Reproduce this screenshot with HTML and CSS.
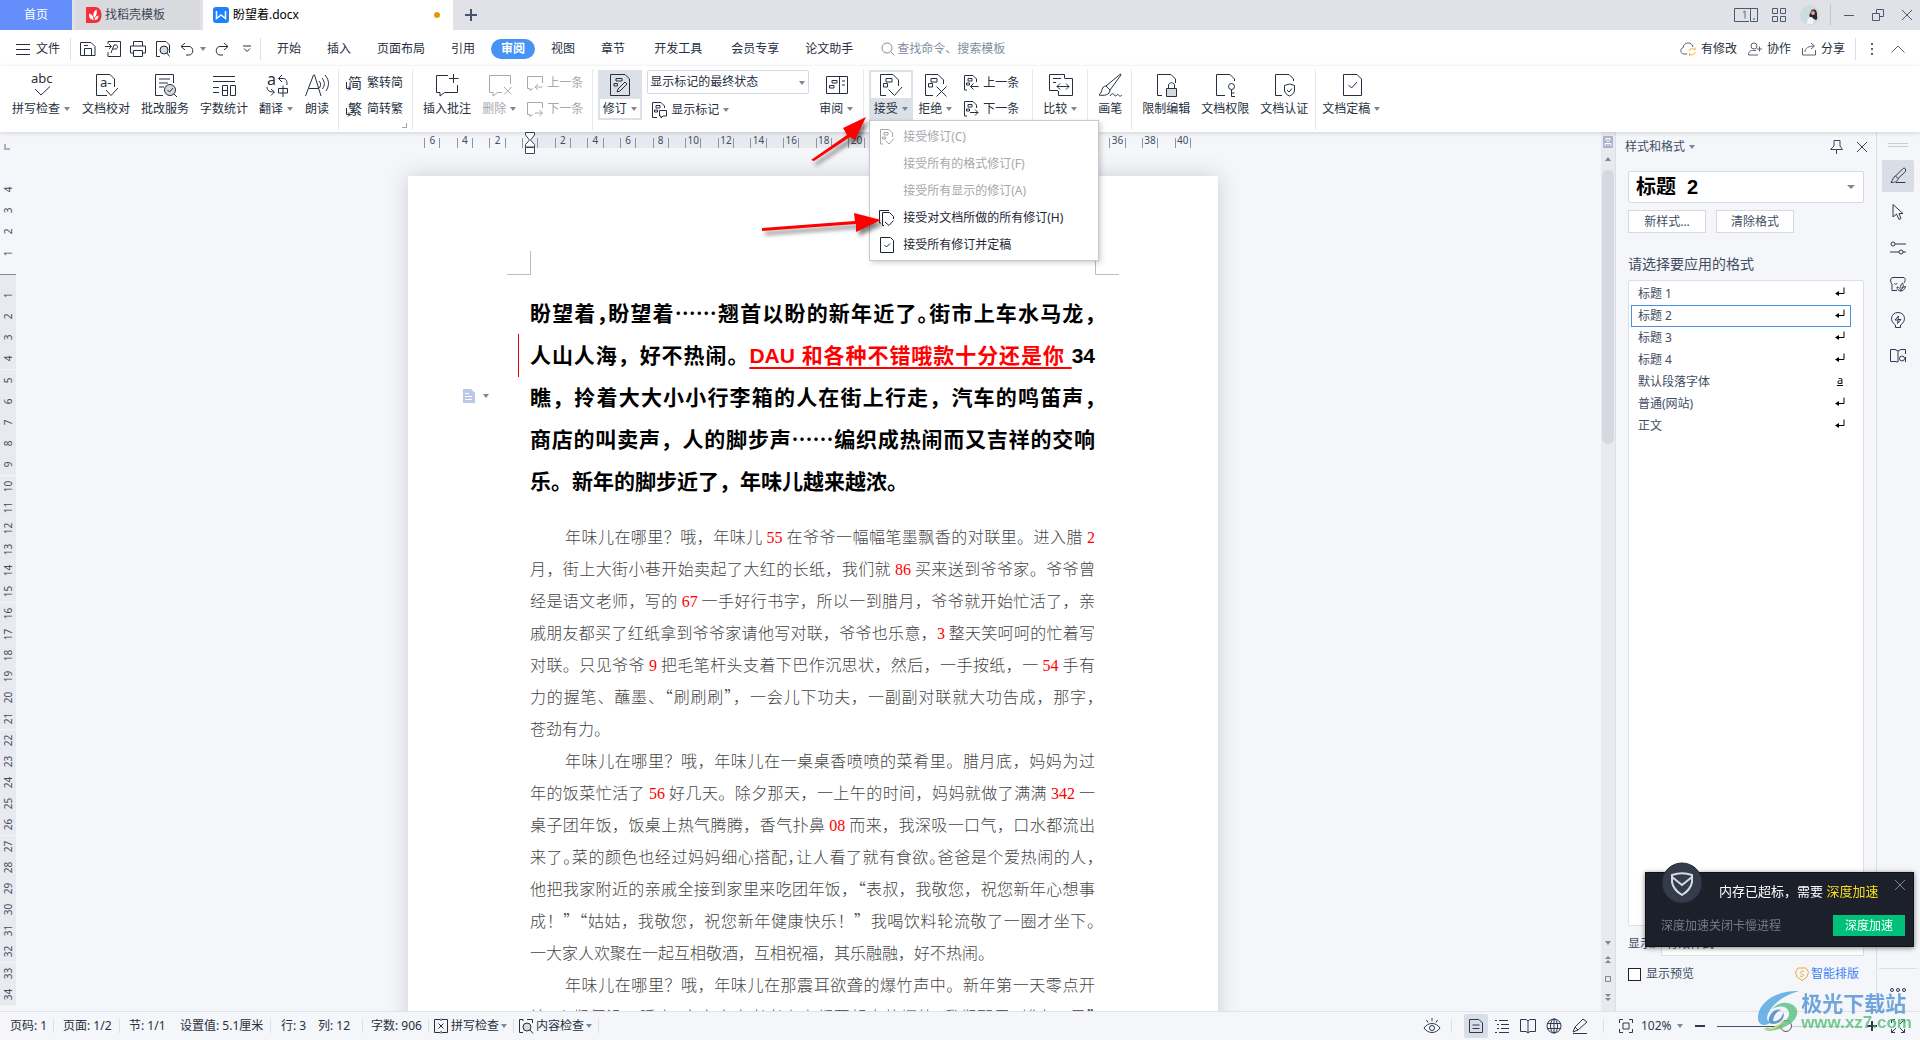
FILE: index.html
```html
<!DOCTYPE html>
<html lang="zh-CN">
<head>
<meta charset="utf-8">
<title>盼望着.docx</title>
<link rel="stylesheet" href="styles.css">
</head>
<body>
<svg class="defs" aria-hidden="true">
  <symbol id="accept" viewBox="0 0 24 24"><path d="M7 22.500H1.500V1.500H14L19.500 7V13"/><path d="M7 5.500h6v3.500H7zM4.500 10.500h4v3.500h-4z"/><path d="M9.500 16.500L15.500 22.500L23 14"/></symbol>
  <symbol id="reject" viewBox="0 0 24 24"><path d="M9 22.500H1.500V1.500H14L19.500 7V11"/><path d="M7 5.500h6v3.500H7zM4.500 10.500h4v3.500h-4z"/><path d="M12.500 13.500L22.500 23.500M22.500 13.500L12.500 23.500"/></symbol>
  <symbol id="rev-prev" viewBox="0 0 16 16"><path d="M4 15H1.500V.5H10L13.500 4V7M5 3.500h4v2.500H5zM3.500 8h3v2h-3zM15.500 11.500H7.500M10.500 8.500L7.500 11.500L10.500 14.500"/></symbol>
  <symbol id="rev-next" viewBox="0 0 16 16"><path d="M4 15H1.500V.5H10L13.500 4V7M5 3.500h4v2.500H5zM3.500 8h3v2h-3zM7 11.500H15M12 8.500L15 11.500L12 14.500"/></symbol>
  <symbol id="com-prev" viewBox="0 0 16 16"><path d="M15.500 8V1.500H.5V13.500H3V15.500L6 13.500M15.500 12H8M11 9L8 12L11 15"/></symbol>
  <symbol id="com-next" viewBox="0 0 16 16"><path d="M15.500 7V1.500H.5V13.500H3V15.500L6 13.500M8 12H15.500M12.500 9L15.500 12L12.500 15"/></symbol>
  <symbol id="close" viewBox="0 0 12 12"><path d="M1 1L11 11M11 1L1 11"/></symbol>
  <symbol id="return" viewBox="0 0 10 10"><path d="M9 0.500V6.500H2"/><path class="solid" d="M0 6.500L4 4V9Z"/></symbol>
</svg>

<div class="app">
  <header class="titlebar">
    <button class="tab tab-home">首页</button>
    <button class="tab tab-store">
      <svg class="ic16" viewBox="0 0 16 16"><path d="M0 0H9C13 0 15.500 3 15.500 8S13 16 9 16H0z" fill="#f5303c" stroke="none"/><path d="M7.500 13C3 12 2.500 9 3.500 6.500C6 7.500 7.500 9 7.500 13ZM8 11C6.500 7 8 4 10.500 2.500C11.500 6 10.500 9 8 11ZM8.500 13C9 10 10.500 9 12.500 8.500C12.500 11.500 11 13 8.500 13Z" fill="#fff" stroke="none"/></svg>
      <span>找稻壳模板</span>
    </button>
    <button class="tab tab-doc">
      <svg class="ic16" viewBox="0 0 16 16"><rect width="16" height="16" rx="3" fill="#1c83fb" stroke="none"/><path d="M3.500 4V11.500L8 8L12.500 11.500V4" stroke="#fff" stroke-width="1.500"/></svg>
      <span>盼望着.docx</span><i class="unsaved"></i>
    </button>
    <button class="new-tab" aria-label="新建"><svg class="ic12" viewBox="0 0 12 12"><path d="M6 0V12M0 6H12" stroke-width="2"/></svg></button>
    <div class="window-tools">
      <svg class="ic24" viewBox="0 0 24 14"><path d="M15 13.500H.5V.5H23.500M16.500 2.500V13.500H23.500V.5H16.500zM19 11H21"/><path d="M9 4.500L11 3V10.500" stroke="#6b6660"/></svg>
      <svg class="ic14" viewBox="0 0 14 14"><path d="M.5.5h5v5h-5zM8.500.5h5v5h-5zM.5 8.500h5v5h-5zM8.500 8.500h5v5h-5z"/></svg>
      <svg class="avatar" viewBox="0 0 20 20"><circle cx="10" cy="10" r="10" fill="#cfdbe2" stroke="none"/><path d="M10 12C8 10 11 8 11 6C13 3 17 4 17 9C17 13 18 14 16 15Z" fill="#2e2529" stroke="none"/><path d="M7 19C7 14 9 12 12 12C14 14 14 17 13 19Z" fill="#f2f5f7" stroke="none"/><circle cx="13" cy="8" r="2" fill="#dba79a" stroke="none"/><path d="M11 5L15 4" stroke="#b99a70"/></svg>
      <span class="sep"></span>
      <button aria-label="最小化"><svg class="ic12" viewBox="0 0 12 12"><path d="M1 6.500H11"/></svg></button>
      <button aria-label="还原"><svg class="ic12" viewBox="0 0 12 12"><path d="M.5 4.500h7v7h-7zM4.500 4V.5H11.500V7.500H8"/></svg></button>
      <button aria-label="关闭"><svg class="ic12"><use href="#close"/></svg></button>
    </div>
  </header>

  <nav class="menubar">
    <button class="file"><svg class="ic14" viewBox="0 0 14 12"><path d="M0 1.500H14M0 6.500H14M0 11.500H14" /></svg>文件</button>
    <span class="sep"></span>
    <div class="quick">
      <button aria-label="保存"><svg class="ic16" viewBox="0 0 16 16"><path d="M.5 1.500H11L15 5.500V14.500H.5zM4.500 14.500V7.500H11.500V14.500M4 4.500H8"/></svg></button>
      <button aria-label="输出为PDF"><svg class="ic16" viewBox="0 0 16 16"><path d="M3 3V.5H15.500V15.500H3V11M0 5.500H6M4 3L6.500 5.500L4 8M6 12L9 4H11C13 4 13 8 11 8H8"/></svg></button>
      <button aria-label="打印"><svg class="ic16" viewBox="0 0 16 16"><path d="M3.500 5V.5H12.500V5M3.500 12H.5V5H15.500V12H12.500M3.500 9.500H12.500V15.500H3.500z"/></svg></button>
      <button aria-label="打印预览"><svg class="ic16" viewBox="0 0 16 16"><path d="M5 15.500H1.500V.5H11L14.500 4V12"/><circle cx="9" cy="9" r="4" fill="#d5dae0"/><path d="M12 12L14.500 15.500"/></svg></button>
      <button class="undo" aria-label="撤销"><svg class="ic14" viewBox="0 0 14 14"><path d="M5 1L1 4.500L5 8M1 4.500H9C14 4.500 14 13 9 13H6"/></svg><i class="caret"></i></button>
      <button class="redo" aria-label="恢复"><svg class="ic14" viewBox="0 0 14 14"><path d="M9 1L13 4.500L9 8M13 4.500H5C0 4.500 0 13 5 13H8"/></svg></button>
      <button aria-label="更多"><svg class="ic8" viewBox="0 0 8 8"><path d="M0 1H8M1 3.500L4 6.500L7 3.500"/></svg></button>
    </div>
    <span class="sep"></span>
    <div class="menus">
      <button>开始</button><button>插入</button><button>页面布局</button><button>引用</button><button class="active">审阅</button><button>视图</button><button>章节</button><button class="spaced">开发工具</button><button>会员专享</button><button>论文助手</button>
    </div>
    <label class="search"><svg class="ic14" viewBox="0 0 14 14"><circle cx="6" cy="6" r="5"/><path d="M10 10L13.500 13.500"/></svg><input type="text" placeholder="查找命令、搜索模板"></label>
    <div class="share">
      <button><svg class="ic16" viewBox="0 0 16 14"><path d="M7 12H4C0 12 0 6 3 6C3 0 12-1 13 5"/><path d="M9 9C10 6 13 6 15 8V5.500M15.500 10C14 13 11 14 9.500 11.500V14" stroke="#f5a81c"/></svg>有修改</button>
      <button><svg class="ic14" viewBox="0 0 14 14"><circle cx="6" cy="4" r="3"/><path d="M10 13H.5C.5 8 4 8.500 6 8.500H8M11.500 4.500V9.500M9 7H14"/></svg>协作</button>
      <button><svg class="ic14" viewBox="0 0 14 14"><path d="M.5 6V13H13.500V8M3 10C3 6 7 4 12 4M9 1L12.500 4L9 7"/></svg>分享</button>
      <span class="sep"></span>
      <button aria-label="更多"><svg class="ic4" viewBox="0 0 4 14"><path d="M2 1V3M2 6V8M2 11V13" stroke-width="2"/></svg></button>
      <button aria-label="收起功能区"><svg class="ic14" viewBox="0 0 14 8"><path d="M.5 7.500L7 1L13.500 7.500"/></svg></button>
    </div>
  </nav>

  <section class="ribbon">
    <div class="group g-proof">
      <button class="big"><svg class="ic24" viewBox="0 0 24 24"><text x="1" y="10" class="abc">abc</text><path d="M5 16L11 22L20 13.500"/></svg><span>拼写检查<i class="caret"></i></span></button>
      <button class="big"><svg class="ic24" viewBox="0 0 24 24"><path d="M13 22.500H2.500V1.500H16L20.500 6V14M12 17L17 22.500L24 15"/><text x="6" y="14" class="abc">a-</text></svg><span>文档校对</span></button>
      <button class="big"><svg class="ic24" viewBox="0 0 24 24"><path d="M10 22.500H2.500V1.500H20.500V10M6 6H17M6 10H15M6 14H11"/><circle cx="17" cy="17" r="5.500" fill="#d5dae0"/><path d="M14.500 17L16.500 19L20 15M21 21L24 24"/></svg><span>批改服务</span></button>
      <button class="big"><svg class="ic24" viewBox="0 0 24 24"><path d="M1 3.500H23M1 8.500H23M1 14.500H7M1 19.500H7M10.500 12.500H15.500V22.500H10.500zM10.500 17.500H15.500M18.500 12.500H23.500V22.500H18.500z"/></svg><span>字数统计</span></button>
      <button class="big"><svg class="ic24" viewBox="0 0 24 24"><text x="2" y="12" class="glyph">a</text><path d="M17 2L13.500 5.500L17 9M13.500 5.500H18C22 5.500 22 9 22 12M2 14C2 18 5 19 9 19M6 16L9.500 19L6 22.500M13.500 15.500H22.500V20H13.500zM18 12.500V24"/></svg><span>翻译<i class="caret"></i></span></button>
      <button class="big"><svg class="ic24" viewBox="0 0 24 24"><path d="M.5 23L8.500 2H9.500L16 23M4 15.500H13.500M14 8C16 10 16 12 14.500 15M17 5C20 9 20 12 17.500 16M20 2C25 8 24 13 21 18"/></svg><span>朗读</span></button>
    </div>
    <div class="group g-conv">
      <div class="stack">
        <button><svg class="ic16" viewBox="0 0 16 16"><text x="2" y="13" class="han">简</text><path d="M.5 7V13.500H4M2 11.500L4 13.500L2 15.500"/></svg>繁转简</button>
        <button><svg class="ic16" viewBox="0 0 16 16"><text x="2" y="13" class="han">繁</text><path d="M.5 7V13.500H4M2 11.500L4 13.500L2 15.500"/></svg>简转繁</button>
      </div>
      <i class="corner"></i>
    </div>
    <div class="group g-comment">
      <button class="big"><svg class="ic24" viewBox="0 0 24 24"><path d="M13 2.500H1.500V19.500H5V23L9.500 19.500H22.500V12M18.500 1V10M14 5.500H23.500"/></svg><span>插入批注</span></button>
      <button class="big off"><svg class="ic24" viewBox="0 0 24 24"><path d="M22.500 11V2.500H1.500V19.500H5V23L9.500 19.500H14M16 14L23.500 21.500M23.500 14L16 21.500"/></svg><span>删除<i class="caret"></i></span></button>
      <div class="stack off">
        <button><svg class="ic16"><use href="#com-prev"/></svg>上一条</button>
        <button><svg class="ic16"><use href="#com-next"/></svg>下一条</button>
      </div>
    </div>
    <div class="group g-track">
      <button class="big boxed top-on"><svg class="ic24" viewBox="0 0 24 24"><path d="M2.500 1.500H17L21.500 6V22.500H2.500zM8 5.500h6V8H8zM6 10.500h3.500V13H6zM9 19L10 16L17 9L19 11L12 18z"/></svg><span>修订<i class="caret"></i></span></button>
      <div class="track-opts">
        <div class="select-wrap"><select aria-label="显示标记方式"><option>显示标记的最终状态</option></select><i class="caret"></i></div>
        <button><svg class="ic16" viewBox="0 0 16 16"><path d="M6 15.500H1.500V.5H10L13.500 4V6M5 3.500h4v2.500H5zM3.500 8h3v2h-3zM8.500 8.500H15.500V14H12L10 16V14H8.500z"/></svg>显示标记<i class="caret"></i></button>
      </div>
      <button class="big"><svg class="ic24" viewBox="0 0 24 24"><path d="M1.500 3.500H22.500V20.500H1.500zM14.500 3.500V20.500M17 8H20M17 12H20M7 7.500h5V10H7zM4.500 12.500H9V15H4.500z"/></svg><span>审阅<i class="caret"></i></span></button>
    </div>
    <div class="group g-accept">
      <div class="dropdown">
        <button class="big boxed bottom-on"><svg class="ic24"><use href="#accept"/></svg><span>接受<i class="caret"></i></span></button>
        <div class="menu" role="menu">
          <button class="off" role="menuitem" disabled><svg class="ic16" viewBox="0 0 16 16"><path d="M4 15H1.500V.5H10L13.500 4V8M5 3.500h4v2.500H5zM3.500 8h3v2h-3zM6.500 11.500L10 15L15 9.500"/></svg><span>接受修订(C)</span></button>
          <button class="off" role="menuitem" disabled><i class="ic16"></i><span>接受所有的格式修订(F)</span></button>
          <button class="off" role="menuitem" disabled><i class="ic16"></i><span>接受所有显示的修订(A)</span></button>
          <button role="menuitem"><svg class="ic16" viewBox="0 0 16 16"><path d="M2 13H.5V.5H10M5 15.500H3.500V2.500H10.500L14.500 6.500V9M6 12L10 15.500L14.500 10.500"/></svg><span>接受对文档所做的所有修订(H)</span></button>
          <button role="menuitem"><svg class="ic16" viewBox="0 0 16 16"><path d="M1.500.5H11.500L14.500 3.500V15.500H1.500zM5.500 8L7.500 10L11 6.500"/></svg><span>接受所有修订并定稿</span></button>
        </div>
      </div>
      <button class="big"><svg class="ic24"><use href="#reject"/></svg><span>拒绝<i class="caret"></i></span></button>
      <div class="stack">
        <button><svg class="ic16"><use href="#rev-prev"/></svg>上一条</button>
        <button><svg class="ic16"><use href="#rev-next"/></svg>下一条</button>
      </div>
    </div>
    <div class="group">
      <button class="big"><svg class="ic24" viewBox="0 0 24 24"><path d="M9 17.500H.5V1.500H15.500V5M4 5.500H12M4 9.500H7M15.500 5.500H23.500V22.500H9.500V18M8 13.500H20M11 10.500L8 13.500L11 16.500M17 10.500L20 13.500L17 16.500"/></svg><span>比较<i class="caret"></i></span></button>
    </div>
    <div class="group">
      <button class="big"><svg class="ic24" viewBox="0 0 24 24"><path d="M22.500 1L8 13L12 17L23 2zM8 13C3 13 5 19 1 22C6 23 12 22 12 17M12 23C14 20 15 20 16.500 22.500C18 24 19 21 20 21.500C22 24 23 23 24 22"/></svg><span>画笔</span></button>
    </div>
    <div class="group g-protect">
      <button class="big"><svg class="ic24" viewBox="0 0 24 24"><path d="M8 22.500H3.500V1.500H17L21.500 6V10"/><path d="M12.500 15.500H22.500V23.500H12.500z" fill="#d5dae0"/><path d="M14.500 15.500V12C15 9 20 9 20.500 12V15.500"/></svg><span>限制编辑</span></button>
      <button class="big"><svg class="ic24" viewBox="0 0 24 24"><path d="M12 22.500H3.500V1.500H17L21.500 6V8"/><circle cx="18.500" cy="13.500" r="3"/><path d="M18.500 16.500V23.500H22M18.500 20H21.500"/></svg><span>文档权限</span></button>
      <button class="big"><svg class="ic24" viewBox="0 0 24 24"><path d="M10 22.500H3.500V1.500H17L21.500 6V8M17.500 11L22.500 12.500V17C22.500 20 20 22 17.500 23C15 22 12.500 20 12.500 17V12.500zM15 17L17 19L20 15.500"/></svg><span>文档认证</span></button>
    </div>
    <div class="group g-final">
      <button class="big"><svg class="ic24" viewBox="0 0 24 24"><path d="M3.500 1.500H17L21.500 6V22.500H3.500zM8.500 12L11.500 15L17 9"/></svg><span>文档定稿<i class="caret"></i></span></button>
    </div>
  </section>

  <main class="workspace">
    <aside class="vruler">
      <i class="tabstop"></i>
      <div class="vscale"><span>4</span><span>3</span><span>2</span><span>1</span><span class="origin"></span><span>1</span><span>2</span><span>3</span><span>4</span><span>5</span><span>6</span><span>7</span><span>8</span><span>9</span><span>10</span><span>11</span><span>12</span><span>13</span><span>14</span><span>15</span><span>16</span><span>17</span><span>18</span><span>19</span><span>20</span><span>21</span><span>22</span><span>23</span><span>24</span><span>25</span><span>26</span><span>27</span><span>28</span><span>29</span><span>30</span><span>31</span><span>32</span><span>33</span><span>34</span></div>
    </aside>

    <div class="canvas">
      <div class="hruler">
        <div class="hscale"><b><span>6</span></b><b><span>4</span></b><b><span>2</span></b><b><span></span></b><b><span>2</span></b><b><span>4</span></b><b><span>6</span></b><b><span>8</span></b><b><span>10</span></b><b><span>12</span></b><b><span>14</span></b><b><span>16</span></b><b><span>18</span></b><b><span>20</span></b><b><span></span></b><b><span></span></b><b><span></span></b><b><span></span></b><b><span></span></b><b><span></span></b><b><span></span></b><b><span>36</span></b><b><span>38</span></b><b><span>40</span></b></div>
        <svg class="indent" viewBox="0 0 10 22"><path d="M.5.5H9.500V3L5.500 8L9.500 12.500V15H.5V12.500L4.500 8L.5 3zM.5 15.500h9v6h-9z" fill="#fff"/></svg>
      </div>
      <article class="page">
        <i class="crop crop-l"></i><i class="crop crop-r"></i>
        <i class="change-bar"></i>
        <button class="paste-opt" aria-label="段落布局"><svg class="ic14" viewBox="0 0 12 14"><path d="M0 0H8L12 4V14H0z" fill="#b9c9e6" stroke="none"/><path d="M2 4.500H6M2 7.500H9M2 10.500H9" stroke="#fff"/></svg><i class="caret"></i></button>
        <h2>
          <span class="ln">盼望着<s>，</s>盼望着<span class="dots">……</span>翘首以盼的新年近了<s>。</s>街市上车水马龙<s>，</s></span>
          <span class="ln">人山人海，好不热闹。<ins>DAU 和各种不错哦款十分还是你 </ins>34</span>
          <span class="ln">瞧，拎着大大小小行李箱的人在街上行走，汽车的鸣笛声<s>，</s></span>
          <span class="ln">商店的叫卖声，人的脚步声<span class="dots">……</span>编织成热闹而又吉祥的交响</span>
          <span class="ln end">乐。新年的脚步近了，年味儿越来越浓。</span>
        </h2>
        <p>
          <span class="ln first">年味儿在哪里？哦，年味儿 <em>55</em> 在爷爷一幅幅笔墨飘香的对联里。进入腊 <em>2</em></span>
          <span class="ln">月，街上大街小巷开始卖起了大红的长纸，我们就 <em>86</em> 买来送到爷爷家。爷爷曾</span>
          <span class="ln">经是语文老师，写的 <em>67</em> 一手好行书字，所以一到腊月，爷爷就开始忙活了，亲</span>
          <span class="ln">戚朋友都买了红纸拿到爷爷家请他写对联，爷爷也乐意，<em>3</em> 整天笑呵呵的忙着写</span>
          <span class="ln">对联。只见爷爷 <em>9</em> 把毛笔杆头支着下巴作沉思状，然后，一手按纸，一 <em>54</em> 手有</span>
          <span class="ln">力的握笔、蘸墨、“刷刷刷”，一会儿下功夫，一副副对联就大功告成，那字<s>，</s></span>
          <span class="ln end">苍劲有力。</span>
        </p>
        <p>
          <span class="ln first">年味儿在哪里？哦，年味儿在一桌桌香喷喷的菜肴里。腊月底，妈妈为过</span>
          <span class="ln">年的饭菜忙活了 <em>56</em> 好几天。除夕那天，一上午的时间，妈妈就做了满满 <em>342</em> 一</span>
          <span class="ln">桌子团年饭，饭桌上热气腾腾，香气扑鼻 <em>08</em> 而来，我深吸一口气，口水都流出</span>
          <span class="ln">来了<s>。</s>菜的颜色也经过妈妈细心搭配<s>，</s>让人看了就有食欲<s>。</s>爸爸是个爱热闹的人<s>，</s></span>
          <span class="ln">他把我家附近的亲戚全接到家里来吃团年饭，“表叔，我敬您，祝您新年心想事</span>
          <span class="ln">成！”“姑姑，我敬您，祝您新年健康快乐！”我喝饮料轮流敬了一圈才坐下<s>。</s></span>
          <span class="ln end">一大家人欢聚在一起互相敬酒，互相祝福，其乐融融，好不热闹。</span>
        </p>
        <p>
          <span class="ln first">年味儿在哪里？哦，年味儿在那震耳欲聋的爆竹声中。新年第一天零点开</span>
          <span class="ln">始<s>，</s>人们便没了睡意<s>，</s>家家户户老老少少都要起来放爆竹<s>，</s>我们那里叫<s>“</s>出天星<s>”</s></span>
        </p>
      </article>
    </div>

    <div class="scrollbar">
      <svg class="ruler-toggle" viewBox="0 0 10 12"><rect width="10" height="12" rx="1" fill="#aab4cb" stroke="none"/><path d="M3 2.500H7V4L5 5.500L3 4zM2 10V7.500H8V10M5 7.500V9" stroke="#fff"/></svg>
      <div class="track"><i class="caret up"></i><i class="thumb"></i></div>
      <div class="jumps"><i class="caret"></i>
        <svg viewBox="0 0 8 8"><path class="solid" d="M4 0L7 3H1zM4 4L7 7H1z"/></svg>
        <svg viewBox="0 0 8 8"><path d="M1.500 1.500h5v5h-5z"/></svg>
        <svg viewBox="0 0 8 8"><path class="solid" d="M1 0H7L4 3zM1 4H7L4 7z"/></svg>
      </div>
    </div>

    <aside class="styles">
      <header><button class="pane-title">样式和格式<i class="caret"></i></button>
        <button aria-label="固定"><svg class="ic14" viewBox="0 0 14 14"><path d="M4 .5H10V6L12.500 9.500H.5L4 6zM6.500 9.500V14"/></svg></button>
        <button aria-label="关闭窗格"><svg class="ic12"><use href="#close"/></svg></button></header>
      <div class="select-wrap current"><select aria-label="当前样式"><option>标题&nbsp; 2</option></select><i class="caret"></i></div>
      <div class="style-btns"><button>新样式...</button><button>清除格式</button></div>
      <h3>请选择要应用的格式</h3>
      <ul>
        <li><button>标题 1<svg><use href="#return"/></svg></button></li>
        <li><button class="sel">标题 2<svg><use href="#return"/></svg></button></li>
        <li><button>标题 3<svg><use href="#return"/></svg></button></li>
        <li><button>标题 4<svg><use href="#return"/></svg></button></li>
        <li><button>默认段落字体<u>a</u></button></li>
        <li><button>普通(网站)<svg><use href="#return"/></svg></button></li>
        <li><button>正文<svg><use href="#return"/></svg></button></li>
      </ul>
      <div class="show-row"><label for="show">显示:</label><select id="show"><option>有效样式</option></select></div>
      <div class="preview-row"><label><input type="checkbox">显示预览</label>
        <a href="#"><svg class="ic14" viewBox="0 0 14 14"><path d="M3 1H11L13.500 5L12 10L7 13.500L2 10L.5 5z" stroke="#f0ab3c"/><path d="M9 4.500C6 3 4 6 7 7C10 8 8 10.500 5 9" stroke="#f0ab3c"/></svg>智能排版</a></div>
    </aside>

    <nav class="toolstrip">
      <i class="grip"></i>
      <button class="on" aria-label="样式"><svg class="ic16" viewBox="0 0 16 16"><path d="M13 .5L5.500 8L8 10.500L15.500 3.500V1C15 0 14 0 13 .5zM5.500 8C3 9 3 12 1 14.500C4 14.500 8 14 8 10.500M6 14.500H15.500"/></svg></button>
      <button aria-label="选择"><svg class="ic16" viewBox="0 0 16 16"><path d="M3 .5V13L6.500 10L9 15.500L11 14.500L9 9.500H13z"/></svg></button>
      <button aria-label="属性"><svg class="ic16" viewBox="0 0 16 16"><circle cx="3" cy="4" r="2"/><circle cx="11" cy="12" r="2"/><path d="M5 4H16M0 12H9M13 12H16"/></svg></button>
      <button aria-label="稻壳"><svg class="ic16" viewBox="0 0 16 16"><path d="M7 14.500H2V8M2 8C0 6 0 1.500 3 1.500H13C16 1.500 15.500 5 14 7M4.500 7C5 9 6.500 9 7 7"/><path d="M11 15C8 15 7 13 7 11C9 11 11 13 11 15ZM11 15C13 15 15 13 15.500 10.500C13 11 11 13 11 15ZM11 12C10 10 11 8 12.500 7C14 9 13 11 12 12.500"/></svg></button>
      <button aria-label="帮助"><svg class="ic16" viewBox="0 0 16 16"><path d="M5.500 13C-1 9 1 .5 8 .5S17 9 10.500 13V15.500H5.500zM8.500 4L5 8H8L7.500 11.500L11 7.500H8z"/></svg></button>
      <button aria-label="阅读"><svg class="ic16" viewBox="0 0 16 16"><path d="M.5 1.500H5L8 3L11 1.500H15.500V6M8 3V14M.5 1.500V13.500H5L8 14M15.500 14V9"/><circle cx="12" cy="10.500" r="2.500"/></svg></button>
      <span class="strip-end"><svg class="ic16" viewBox="0 0 16 4"><circle cx="2" cy="2" r="1.500"/><circle cx="8" cy="2" r="1.500"/><circle cx="14" cy="2" r="1.500"/></svg></span>
    </nav>
  </main>

  <footer class="status">
    <div class="status-left">
      <span class="w-code">页码: 1</span><i class="sep"></i><span class="w-page">页面: 1/2</span><i class="sep"></i><span class="w-sec">节: 1/1</span><span class="w-set">设置值: 5.1厘米</span><i class="sep"></i><span class="w-row">行: 3</span><span class="w-col">列: 12</span><i class="sep"></i><span class="w-words">字数: 906</span><i class="sep"></i>
      <button><svg class="ic16" viewBox="0 0 16 16"><path d="M7 1.500H1.500V14.500H7M9 1.500H14.500V14.500H9M5.500 5.500L10.500 10.500M10.500 5.500L5.500 10.500M8 .5V3M8 13V15.500"/></svg>拼写检查<i class="caret"></i></button><i class="sep"></i>
      <button><svg class="ic16" viewBox="0 0 16 16"><path d="M5 14.500H1.500V1.500H5M9 1.500H14.500V5M5 1.500V3"/><circle cx="9" cy="9" r="4" fill="#d5dae0"/><path d="M12 12L15 15.500"/></svg>内容检查<i class="caret"></i></button><i class="sep"></i>
    </div>
    <div class="status-right">
      <button aria-label="护眼模式"><svg class="ic16" viewBox="0 0 16 16"><path d="M0 10C4 4 12 4 16 10C12 16 4 16 0 10M8 0V3M2.500 2L4 4.500M13.500 2L12 4.500"/><circle cx="8" cy="10" r="2.500"/></svg></button>
      <i class="sep"></i>
      <div class="views">
        <button class="on" aria-label="页面视图"><svg class="ic16" viewBox="0 0 16 16"><path d="M1.500 1.500H11L14.500 5V14.500H1.500zM4.500 7H11.500M4.500 10.500H11.500"/></svg></button>
        <button aria-label="大纲"><svg class="ic16" viewBox="0 0 16 16"><path d="M1 2.500H3M5 2.500H14M3 6.500H5M7 6.500H15M3 10.500H5M7 10.500H15M1 14.500H3M5 14.500H15"/></svg></button>
        <button aria-label="阅读版式"><svg class="ic16" viewBox="0 0 16 16"><path d="M.5 1.500H6L8 3L10 1.500H15.500V13.500H10L8 15L6 13.500H.5zM8 3V15"/></svg></button>
        <button aria-label="Web版式"><svg class="ic16" viewBox="0 0 16 16"><circle cx="8" cy="8" r="7"/><ellipse cx="8" cy="8" rx="3.500" ry="7"/><path d="M1 5.500H15M1 10.500H15M8 1V15"/></svg></button>
        <button aria-label="写作模式"><svg class="ic16" viewBox="0 0 16 16"><path d="M1 14L3 9L11 1L15 4L6 12zM3 9L6 12M1 15.500H15"/></svg></button>
      </div>
      <i class="sep"></i>
      <button class="fit" aria-label="最佳显示比例"><svg class="ic14" viewBox="0 0 14 14"><path d="M.5 4V.5H4M10 .5H13.500V4M13.500 10V13.500H10M4 13.500H.5V10M4 4h6v6H4z"/></svg></button>
      <button class="zoom">102%<i class="caret"></i></button>
      <button aria-label="缩小"><svg class="ic12" viewBox="0 0 12 12"><path d="M1 6H11" stroke-width="2"/></svg></button>
      <input type="range" min="0" max="100" value="47" aria-label="显示比例">
      <button aria-label="放大"><svg class="ic12" viewBox="0 0 12 12"><path d="M1 6H11M6 1V11" stroke-width="2"/></svg></button>
      <button class="full" aria-label="全屏"><svg class="ic14" viewBox="0 0 14 14"><path d="M.5 4V.5H4M.5.5L5 5M10 .5H13.500V4M13.500.5L9 5M13.500 10V13.500H10M13.500 13.500L9 9M4 13.500H.5V10M.5 13.500L5 9"/></svg></button>
    </div>
  </footer>
</div>

<svg class="arrows" width="300" height="150" viewBox="0 0 300 150" aria-hidden="true">
  <g><path d="M51 49L87 24L83 17L106 6L95 29L90 26L54 50z"/><path d="M2 117L95 110L94 102L121 109L96 121L96 113L2 120z"/></g>
</svg>

<section class="toast">
  <svg class="shield" viewBox="0 0 42 42"><circle cx="21" cy="21" r="20" fill="#343b4a" stroke="#222733"/><path d="M11 13C17 11 25 11 31 13V20C30 26 26 30 21 33C16 30 12 26 11 20zM11 15L21 23L31 15" stroke="#d5d9e6" stroke-width="2"/></svg>
  <p class="toast-title">内存已超标，需要 <em>深度加速</em></p>
  <button class="toast-x" aria-label="关闭提示"><svg class="ic12"><use href="#close"/></svg></button>
  <p class="toast-sub">深度加速关闭卡慢进程</p>
  <button class="boost">深度加速</button>
</section>

<div class="brand">
  <svg viewBox="0 0 44 42"><path d="M42 1C20 0 1 12 1 28C1 36 9 37 14 32C9 32 9 26 13 20C20 10 29 5 42 1Z" fill="#55a8e4" stroke="none"/><path d="M15 19C24 9 37 12 40 20C42 30 30 39 12 41C4 40 8 37 14 38C27 34 35 27 31 20C28 15 20 16 15 19Z" fill="#62c188" stroke="none"/><path d="M5 40C14 39 22 35 28 29C25 36 17 41 5 40Z" fill="#d9dc63" stroke="none"/><path d="M12 28C14 21 20 18 25 20C21 20 17 24 16 31C21 32 26 27 26 22C29 28 23 34 16 34C12 34 11 31 12 28Z" fill="#4c86c9" stroke="none"/></svg>
  <div><b>极光下载站</b><span>www.xz7.com</span></div>
</div>
</body>
</html>
```
FILE: styles.css
```css
* { box-sizing: border-box; }
html, body { height: 100%; }
body { margin: 0; overflow: hidden; font: 12px/16px "Noto Sans", "Noto Sans CJK SC", sans-serif; color: #262f40; background: #f5f6f9; }
button, select, input { font: inherit; color: inherit; border: 0; background: none; padding: 0; margin: 0; white-space: nowrap; border-radius: 0; }
p, h2, h3, ul { margin: 0; padding: 0; list-style: none; font-weight: 400; }
i, em { font-style: normal; }
a { color: #3b82f6; text-decoration: none; }
svg { fill: none; stroke: currentColor; stroke-width: 1; flex: none; display: block; overflow: visible; }
svg text { stroke: none; fill: currentColor; }
.solid { fill: currentColor; stroke: none; }
.defs { position: absolute; width: 0; height: 0; }
.ic4 { width: 4px; height: 14px; }
.ic8 { width: 8px; height: 8px; }
.ic12 { width: 12px; height: 12px; }
.ic14 { width: 14px; height: 14px; }
.ic16 { width: 16px; height: 16px; }
.ic24 { width: 24px; height: 24px; }
.sep { flex: none; width: 1px; height: 22px; background: #dddfe5; }
.caret { flex: none; display: inline-block; border: 3px solid transparent; border-top: 4px solid #7b8699; border-bottom: 0; }
.caret.up { border: 3px solid transparent; border-top: 0; border-bottom: 4px solid #7b8699; }
.off { color: #a6a8ac; }
.app { height: 100%; display: flex; flex-direction: column; }

/* Title bar */
.titlebar { flex: none; height: 30px; display: flex; align-items: stretch; background: #e1e2e7; }
.tab { display: flex; align-items: center; gap: 3px; }
.tab-home { width: 72px; justify-content: center; background: #648ffb; color: #fff; margin-right: 3px; }
.tab-store { width: 125px; padding-left: 11px; background: #d8dade; margin-right: 3px; color: #3f4755; }
.tab-doc { width: 250px; padding: 0 13px 0 10px; gap: 4px; background: #fff; color: #000; }
.unsaved { width: 6px; height: 6px; border-radius: 50%; background: #e69a07; margin-left: auto; }
.new-tab { width: 36px; display: flex; align-items: center; justify-content: center; color: #47536b; }
.window-tools { margin-left: auto; display: flex; align-items: center; gap: 14px; padding-right: 6px; color: #4a5875; }
.window-tools .sep { background: #c5c7cd; margin: 0 -4px; }
.window-tools button { margin-left: 1px; width: 14px; display: flex; justify-content: center; }
.window-tools .ic24 { height: 14px; }
.avatar { width: 20px; height: 20px; }

/* Menu bar */
.menubar { flex: none; height: 36px; display: flex; align-items: center; background: #fff; padding-top: 2px; }
.file { display: flex; align-items: center; gap: 6px; padding: 0 10px 0 16px; }
.quick { display: flex; align-items: center; gap: 9px; padding: 0 9px; }
.quick button { display: flex; align-items: center; }
.undo { gap: 6px; }
.redo { margin-right: 5px; }
.menus { display: flex; padding-left: 3px; }
.menus button { padding: 0 13px; height: 20px; }
.menus .spaced { margin: 0 3px; }
.menus .active { margin: 0 3px; padding: 0 10px; border-radius: 10px; background: #4792f5; color: #fff; font-weight: 700; }
.search { display: flex; align-items: center; gap: 2px; padding-left: 15px; color: #848da0; }
.search input { width: 120px; outline: 0; }
.search input::placeholder { color: #848da0; opacity: 1; }
.share { margin-left: auto; display: flex; align-items: center; gap: 11px; padding-right: 15px; }
.share button { display: flex; align-items: center; gap: 5px; }
.share svg { color: #596273; }
.share .sep { margin: 0 3px 0 -1px; }
.share .ic4 { margin-right: 6px; }

/* Ribbon */
.ribbon { flex: none; height: 66px; display: flex; background: #fff; padding-top: 3px; box-shadow: 0 1px 4px rgba(50, 60, 80, .2); position: relative; z-index: 2; }
.group { display: flex; align-items: flex-start; gap: 11px; padding: 0 9px 0 10px; border-right: 1px solid #e6e8ec; height: 61px; }
.big { display: flex; flex-direction: column; align-items: center; gap: 4px; padding: 4px 0; height: 52px; }
.big span { display: flex; align-items: center; height: 16px; }
.big .caret { margin: 0 1px 0 4px; }
.stack { display: flex; flex-direction: column; gap: 10px; padding-top: 6px; }
.stack button { display: flex; align-items: center; gap: 4px; height: 16px; }
.g-proof { padding-left: 12px; }
.g-conv { padding: 0 9px 0 7px; position: relative; }
.g-conv .stack button { gap: 5px; }
.corner { position: absolute; right: 5px; bottom: 2px; width: 5px; height: 5px; border: solid #9aa3b3; border-width: 0 1px 1px 0; }
.g-comment .stack { margin-left: -1px; }
.g-track { padding: 0 9px 0 5px; gap: 5px; }
.g-track > .big:last-child { margin-left: 5px; }
.g-accept { padding: 0 13px 0 5px; gap: 5px; }
.g-accept .stack { margin-left: 5px; }
.g-protect { padding-right: 7px; }
.g-final { border: 0; padding-left: 6px; }
.boxed { width: 44px; height: 50px; margin-top: 1px; padding: 1px 0 3px; border: 2px solid #dce1e8; }
.top-on { background: linear-gradient(#dce1e8 0 27px, #fff 27px); }
.bottom-on { background: linear-gradient(#fff 0 26px, #dce1e8 26px); }
.track-opts { display: flex; flex-direction: column; gap: 8px; padding-top: 1px; width: 162px; }
.track-opts button { display: flex; align-items: center; gap: 4px; padding-left: 4px; }
.select-wrap { position: relative; height: 24px; border: 1px solid #d6d9df; border-radius: 2px; background: #fff; }
.select-wrap select { appearance: none; width: 100%; height: 100%; padding-left: 2px; }
.select-wrap .caret { position: absolute; right: 3px; top: 10px; }
.abc { font-size: 13px; }
.glyph { font-size: 16px; }
.han { font-size: 14px; }
.dropdown { position: relative; }
.menu { position: absolute; left: 0; top: 51px; width: 230px; padding: 2px 0; background: #fff; border: 1px solid #c6c9ce; box-shadow: 2px 2px 5px rgba(0, 0, 0, .18); display: flex; flex-direction: column; color: #1d2533; }
.menu button { display: flex; align-items: center; gap: 8px; height: 27px; padding: 0 9px; }
.menu .off { color: #a6a8ac; }

/* Workspace */
.workspace { flex: 1; min-height: 0; display: flex; overflow: hidden; }
.vruler { flex: none; width: 16px; padding: 7px 0 6px; display: flex; flex-direction: column; color: #414d63; }
.tabstop { width: 6px; height: 6px; margin: 5px 0 29px 4px; border: solid #aab1c0; border-width: 0 0 2px 2px; flex: none; }
.vscale { flex: 1; display: grid; grid-template-rows: repeat(39, 1fr); font-size: 10px; line-height: 16px; }
.vscale span { writing-mode: vertical-rl; transform: rotate(180deg); text-align: center; min-height: 0; }
.vscale .origin ~ span { background: #e8eaf0; }
.vscale .origin { writing-mode: horizontal-tb; transform: none; background: linear-gradient(transparent 50%, #e8eaf0 50%); display: flex; align-items: center; }
.vscale .origin::before { content: ""; width: 16px; height: 1px; background: #7f8ba3; }
.canvas { flex: 1; min-width: 0; overflow: hidden; padding-left: 9px; display: flex; flex-direction: column; align-items: center; }
.hruler { flex: none; width: 810px; height: 44px; position: relative; padding-left: 8px; }
.hscale { width: 783px; height: 16px; display: grid; grid-template-columns: repeat(24, 1fr); background: linear-gradient(to right, transparent 0 114px, #e8eaf0 114px 679px, transparent 679px); }
.hscale b { font-weight: 400; display: flex; justify-content: center; align-items: flex-end; }
.hscale span { width: 50%; height: 10px; font-size: 10px; line-height: 4px; display: flex; justify-content: center; border: solid #8c96a8; border-width: 0 1px; color: #414d63; }
.indent { position: absolute; left: 117px; top: 0; width: 10px; height: 22px; color: #3b475c; }
.page { flex: none; position: relative; width: 810px; padding: 117px 123px 60px 122px; background: #fff; box-shadow: 0 0 20px rgba(60, 70, 90, .22); font-family: "Noto Sans CJK SC", sans-serif; }
.crop { position: absolute; top: 75px; width: 24px; height: 24px; border: 0 solid #b9bcc2; border-bottom-width: 1px; }
.crop-l { left: 99px; border-right-width: 1px; }
.crop-r { right: 99px; border-left-width: 1px; }
.change-bar { position: absolute; left: 110px; top: 158px; width: 1px; height: 43px; background: #e60000; }
.paste-opt { position: absolute; left: 54px; top: 213px; display: flex; align-items: center; gap: 7px; }
.page h2 { font: 700 21px/42px "Liberation Sans", "Noto Sans CJK SC", sans-serif; color: #000; margin-bottom: 17px; }
.page p { font-size: 16px; line-height: 32px; font-weight: 300; color: #444; }
.ln { display: block; text-align: justify; text-align-last: justify; white-space: nowrap; }
.ln.first { padding-left: 35px; }
.ln.end { text-align-last: left; }
.ln s { text-decoration: none; font-feature-settings: "halt"; }
.dots { font-family: "Noto Sans CJK SC", sans-serif; line-height: 1; }
.page h2 ins { color: #f00; text-decoration: underline; text-decoration-thickness: 2px; text-underline-offset: 4px; }
.page em { color: #f00; font-family: "Liberation Serif", serif; font-weight: 400; line-height: 1; }

.scrollbar { flex: none; width: 15px; display: flex; flex-direction: column; align-items: center; background: #e8eaf0; border-right: 1px solid #dcdfe5; color: #7b8699; }
.ruler-toggle { width: 10px; height: 12px; margin: 4px 0 9px; }
.track { flex: 1; display: flex; flex-direction: column; align-items: center; gap: 9px; width: 100%; }
.thumb { width: 12px; height: 274px; border-radius: 6px; background: #d5d8e1; }
.jumps { display: flex; flex-direction: column; align-items: center; gap: 11px; padding-bottom: 9px; }
.jumps svg { width: 8px; height: 8px; }

.styles { flex: none; width: 261px; padding: 0 12px; display: flex; flex-direction: column; color: #414d63; border-right: 1px solid #dcdfe5; }
.styles header { display: flex; align-items: center; gap: 12px; height: 30px; margin-right: -4px; }
.styles header button { display: flex; color: #3b475c; }
.styles .pane-title { margin: 0 auto 0 -3px; align-items: center; gap: 4px; color: #414d63; }
.current { height: 32px; margin-top: 9px; color: #000; }
.current select { padding-left: 7px; font: 700 20px "Liberation Sans", "Noto Sans CJK SC", sans-serif; }
.current .caret { right: 8px; top: 13px; border-width: 4px 4px 0; }
.style-btns { display: flex; gap: 10px; margin: 7px 0 23px; }
.style-btns button { width: 78px; height: 23px; border: 1px solid #d6d9df; background: #fff; }
.styles h3 { font-size: 14px; line-height: 16px; margin-bottom: 8px; }
.styles ul { flex: 1; background: #fff; border: 1px solid #dcdfe5; border-radius: 2px; padding: 2px 12px 0 2px; }
.styles li button { width: 100%; height: 22px; padding: 0 5px 0 6px; display: flex; align-items: center; justify-content: space-between; border: 1px solid transparent; }
.styles li .sel { border-color: #4a90e2; }
.styles li svg, .styles li u { width: 10px; height: 10px; color: #000; margin-bottom: 5px; }
.styles li u { font-size: 11px; line-height: 10px; }
.show-row { display: flex; align-items: center; margin-top: 6px; height: 24px; }
.show-row label { width: 33px; }
.show-row select { flex: 1; height: 24px; appearance: none; background: #fff; border: 1px solid #dcdfe5; padding-left: 4px; }
.preview-row { display: flex; align-items: center; justify-content: space-between; padding: 10px 5px 29px 0; }
.preview-row label, .preview-row a { display: flex; align-items: center; gap: 5px; }
.preview-row a { gap: 2px; }
.preview-row input { appearance: none; width: 13px; height: 13px; border: 1px solid #222; background: #fff; }

.toolstrip { flex: none; width: 43px; display: flex; flex-direction: column; align-items: center; gap: 4px; padding: 11px 2px 0 0; color: #2b3a52; }
.grip { width: 20px; height: 4px; border: solid #c9ccd3; border-width: 1px 0; margin-bottom: 9px; }
.toolstrip button { width: 32px; height: 32px; display: flex; align-items: center; justify-content: center; }
.toolstrip .on { background: #d9dee6; border-radius: 2px; }
.strip-end { margin-top: auto; width: 38px; height: 43px; border-top: 1px solid #dcdfe5; display: flex; align-items: center; justify-content: center; }
.strip-end svg { height: 4px; }

/* Status bar */
.status { flex: none; height: 29px; display: flex; align-items: center; border-top: 1px solid #dfe2e8; background: #f5f6f9; }
.status .sep { height: 14px; }
.status-left { display: flex; align-items: center; padding-left: 10px; }
.status-left button { display: flex; align-items: center; gap: 2px; padding: 0 4px; }
.status-left button .caret { margin-right: 2px; }
.w-code { width: 43px; }
.w-page { width: 65px; padding-left: 9px; }
.w-sec { width: 60px; padding-left: 9px; }
.w-set { width: 90px; }
.w-row { width: 47px; padding-left: 10px; }
.w-col { width: 44px; }
.w-words { width: 65px; padding-left: 8px; }
.status-right { margin-left: auto; display: flex; align-items: center; padding-right: 15px; color: #2b3a52; }
.status-right > .sep { margin: 0 12px 0 11px; }
.views { display: flex; gap: 2px; }
.views button { width: 24px; height: 24px; display: flex; align-items: center; justify-content: center; }
.views .on { background: #d9dee6; border-radius: 2px; }
.fit { margin: 0 8px 0 3px; }
.zoom { width: 53px; display: flex; align-items: center; gap: 5px; }
.status-right input { appearance: none; width: 145px; height: 12px; margin: 0 4px 0 11px; background: linear-gradient(#47536b, #47536b) 0 6px / 70px 1px no-repeat, linear-gradient(#c9cdd6, #c9cdd6) 0 6px / 100% 1px no-repeat; }
.status-right input::-webkit-slider-thumb { appearance: none; width: 12px; height: 12px; border: 1px solid #5a5a5a; border-radius: 50%; background: #f5f6f9; }
.full { margin-left: 13px; }

/* Floating layers */
.arrows { position: fixed; left: 760px; top: 111px; z-index: 5; pointer-events: none; }
.arrows path { fill: #f00; stroke: none; }
.arrows g { filter: drop-shadow(3px 4px 2px rgba(0, 0, 0, .5)); }
.toast { position: fixed; right: 6px; bottom: 93px; width: 269px; height: 75px; z-index: 6; display: grid; grid-template: 36px 37px / 73px 1fr auto; background: #1c202b; border: 1px solid #0e1118; color: #fff; box-shadow: 0 1px 5px rgba(0, 0, 0, .5); }
.shield { position: absolute; left: 15px; top: -11px; width: 42px; height: 42px; }
.toast-title { grid-column: 2 / 4; font-size: 13px; line-height: 36px; white-space: nowrap; }
.toast-title em { color: #f7dd1c; }
.toast-x { position: absolute; right: 7px; top: 6px; color: #7f8591; }
.toast-sub { grid-column: 1 / 3; grid-row: 2; padding-left: 15px; line-height: 33px; color: #777b85; }
.boost { grid-row: 2; grid-column: 3; width: 72px; height: 21px; margin: 6px 8px 0 0; background: #00c179; color: #fff; }
.brand { position: fixed; right: 8px; bottom: 8px; z-index: 4; display: flex; align-items: flex-start; opacity: .85; pointer-events: none; }
.brand svg { width: 44px; height: 42px; }
.brand div { display: flex; flex-direction: column; }
.brand b { font: 700 21px/24px "Noto Sans CJK SC", sans-serif; color: #5797d6; }
.brand span { font: 700 17px/18px "Liberation Sans", sans-serif; color: #5fc27f; }
```
